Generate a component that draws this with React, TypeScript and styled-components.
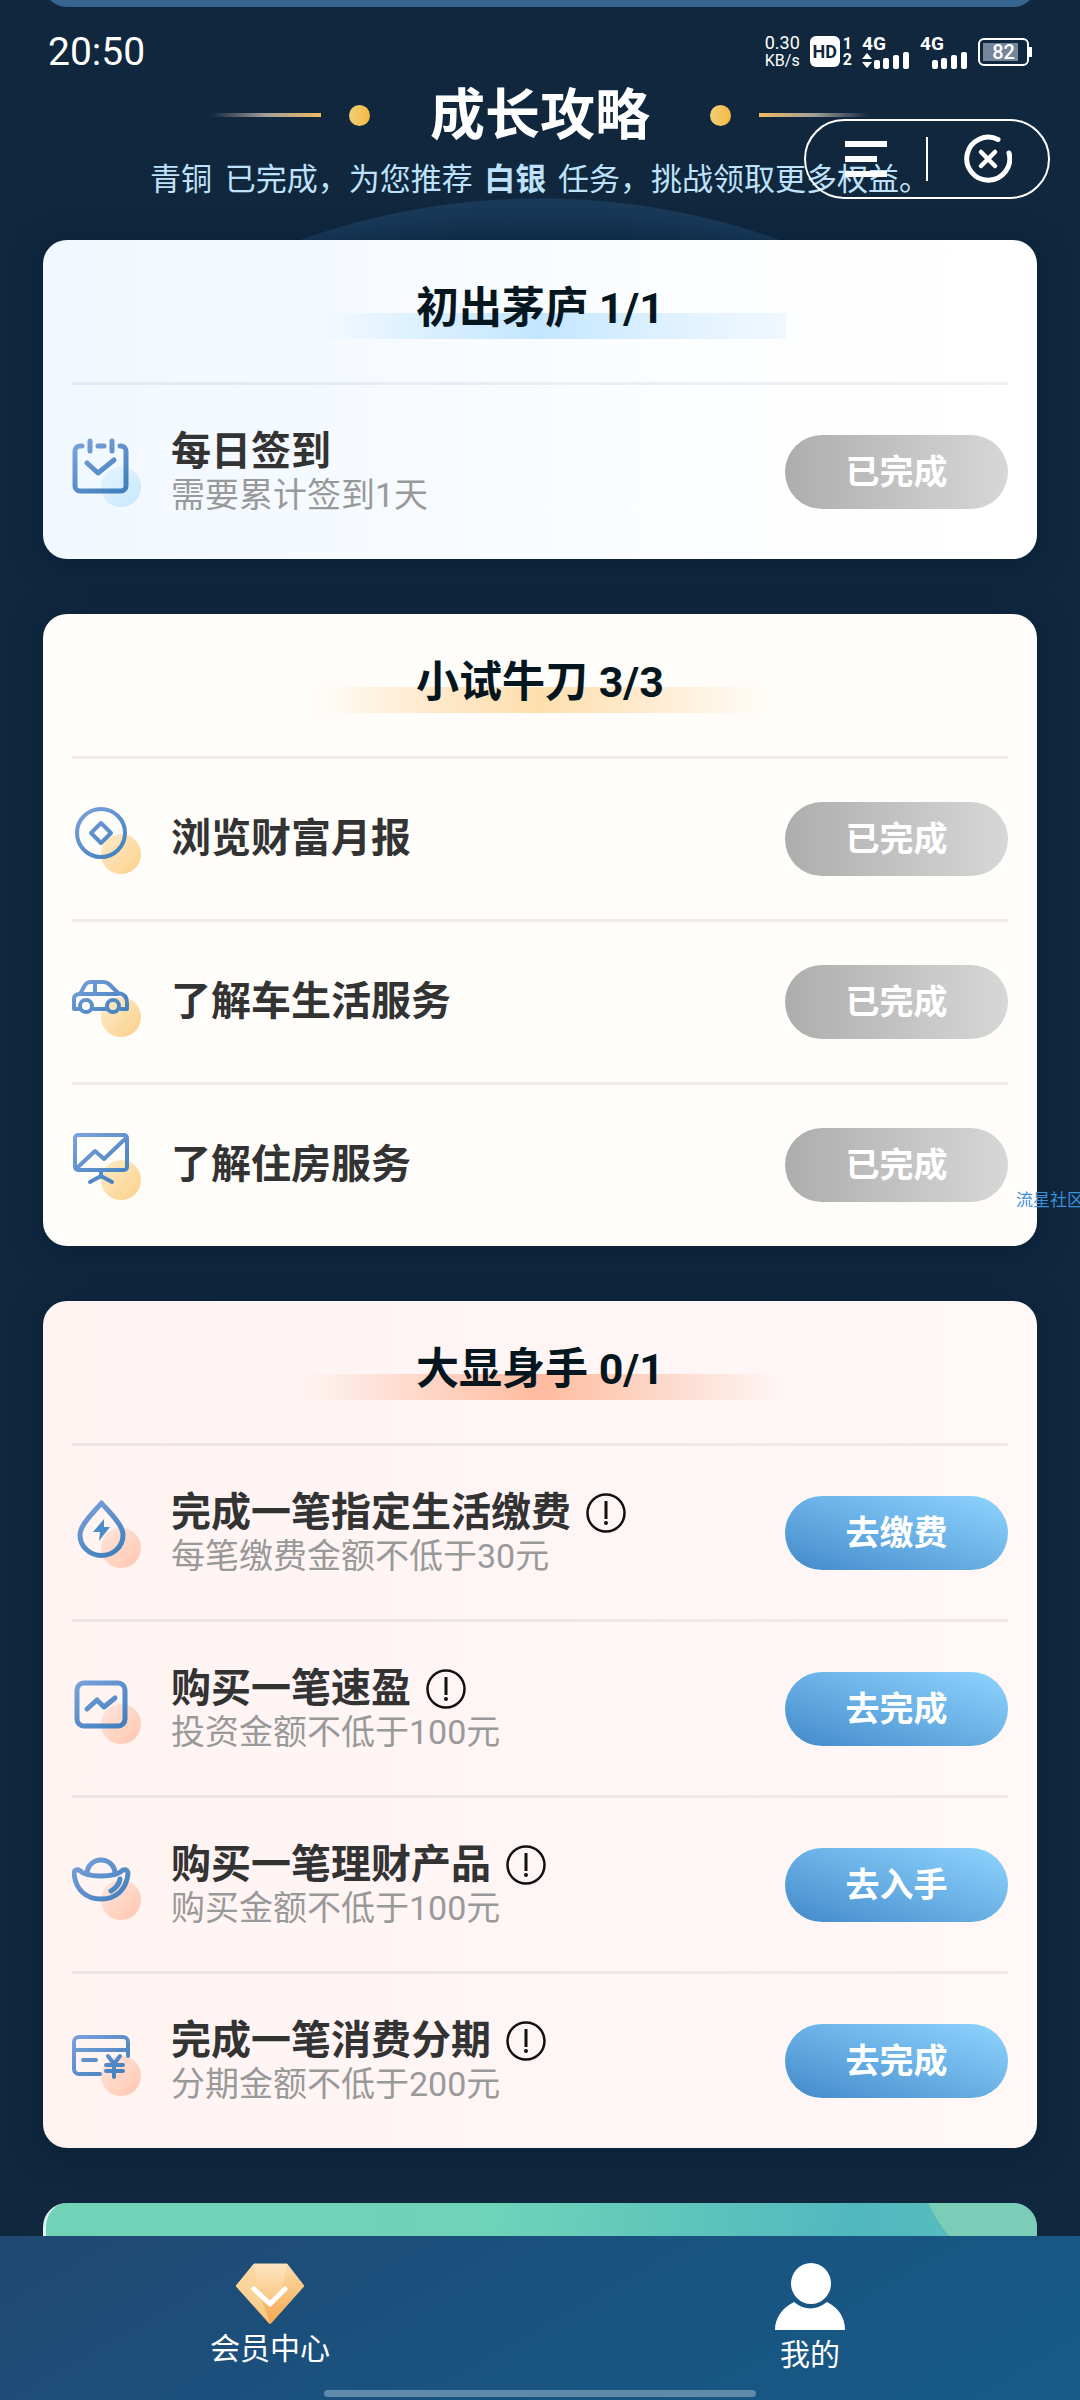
import React from "react";
import styled, { createGlobalStyle } from "styled-components";

const GlobalStyle = createGlobalStyle`
  *, *::before, *::after { box-sizing: border-box; }
  body {
    margin: 0;
    background: #10273e;
    font-family: Roboto, "Noto Sans CJK SC", sans-serif;
  }
  h1, h2, h3, p, ul { margin: 0; padding: 0; }
  ul { list-style: none; }
  button { font-family: inherit; border: 0; padding: 0; background: none; }
  svg { display: block; flex: none; }
`;

type Tone = "blue" | "amber" | "coral";

const tones: Record<
  Tone,
  { card: string; bar: string; dotFrom: string; dotTo: string }
> = {
  blue: {
    card: "linear-gradient(90deg, #f1f8ff 0%, #f7fbff 40%, #fdfeff 70%, #ffffff 100%)",
    bar: "linear-gradient(90deg, rgba(190,228,255,0) 4%, #d9efff 28%, #c3e6ff 50%, #dff1ff 76%, #f1f8ff 100%)",
    dotFrom: "#e6f4ff",
    dotTo: "#c6e7fd",
  },
  amber: {
    card: "#fffdf9",
    bar: "linear-gradient(90deg, rgba(255,226,178,0) 4%, #ffe9cb 28%, #fddfae 50%, #ffeed6 76%, rgba(255,245,228,0) 96%)",
    dotFrom: "#fdecc9",
    dotTo: "#fbd08a",
  },
  coral: {
    card: "linear-gradient(90deg, #fff4f2 0%, #fef5f5 50%, #fff8f7 100%)",
    bar: "linear-gradient(90deg, rgba(255,205,186,0) 1%, #fddccf 22%, #ffbb9f 50%, #fddccf 78%, rgba(255,205,186,0) 99%)",
    dotFrom: "#ffe6dc",
    dotTo: "#ffc6b0",
  },
};

/* ---------- shell ---------- */

const Screen = styled.div`
  display: flex;
  flex-direction: column;
  height: 100vh;
  background: #10273e;
`;

const Content = styled.main`
  position: relative;
  flex: 1;
  min-height: 0;
  overflow: hidden auto;
  scrollbar-width: none;
`;

const PreviousCardEdge = styled.div`
  display: flex;
  align-items: flex-end;
  height: 7px;
  margin: 0 43px;
  overflow: hidden;
`;

const PreviousCard = styled.div`
  flex: 1 0 auto;
  height: 60px;
  border-radius: 24px;
  background: #38658f;
`;

/* ---------- status bar ---------- */

const StatusBar = styled.header`
  display: flex;
  align-items: center;
  justify-content: space-between;
  height: 75px;
  padding: 14px 48px 0;
  color: #fff;
`;

const Clock = styled.time`
  font-size: 39px;
  line-height: 44px;
`;

const StatusIcons = styled.div`
  display: flex;
  align-items: center;
  gap: 10px;
`;

const NetSpeed = styled.div`
  display: flex;
  flex-direction: column;
  align-items: center;
  font-size: 16px;
  line-height: 18px;
`;

const SpeedValue = styled.span`
  font-size: 18px;
`;

const HdGroup = styled.div`
  display: flex;
  gap: 3px;
`;

const HdBadge = styled.span`
  display: flex;
  align-items: center;
  justify-content: center;
  width: 30px;
  height: 31px;
  border-radius: 6px;
  background: #fff;
  color: #10273e;
  font-size: 18px;
  font-weight: 700;
`;

const SimNumbers = styled.span`
  display: flex;
  flex-direction: column;
  font-size: 16px;
  font-weight: 700;
  line-height: 16px;
`;

const SignalGroup = styled.div`
  display: flex;
  flex-direction: column;
  height: 32px;
  font-size: 19px;
  font-weight: 700;
  line-height: 16px;
`;

const Battery = styled.div`
  display: flex;
  align-items: center;
`;

const BatteryBody = styled.div`
  width: 51px;
  height: 28px;
  padding: 3px;
  border: 2px solid #fff;
  border-radius: 6px;
`;

const BatteryLevel = styled.div`
  display: flex;
  align-items: center;
  justify-content: center;
  height: 100%;
  background: linear-gradient(90deg, #75859a 85%, transparent 85%);
  font-size: 20px;
  font-weight: 500;
`;

const BatteryNub = styled.div`
  width: 3px;
  height: 10px;
  background: #fff;
`;

/* ---------- heading ---------- */

const Heading = styled.div`
  display: flex;
  align-items: center;
  justify-content: center;
  height: 66px;
`;

const HeadingText = styled.h1`
  margin: 0 60px;
  color: #fff;
  font-size: 55px;
  font-weight: 700;
  line-height: 66px;
  white-space: nowrap;
`;

const HeadingDot = styled.span`
  width: 21px;
  height: 21px;
  border-radius: 50%;
  background: linear-gradient(90deg, #eed07a, #f8b840);
`;

const HeadingLine = styled.span<{ $side: "left" | "right" }>`
  width: 110px;
  height: 4px;
  margin: ${(p) => (p.$side === "left" ? "0 28px 0 0" : "0 0 0 28px")};
  background: linear-gradient(
    ${(p) => (p.$side === "left" ? "90deg" : "270deg")},
    rgba(160, 160, 160, 0),
    #a3a09a 50%,
    #f0b95f
  );
`;

const Lead = styled.p`
  margin-top: 14px;
  color: #bfe2fb;
  font-size: 31px;
  line-height: 36px;
  text-align: center;
  white-space: nowrap;
`;

const LeadTier = styled.span`
  margin-right: 5px;
`;

const LeadTarget = styled.strong`
  margin: 0 4px;
`;

const Arc = styled.div`
  height: 42px;
  background: radial-gradient(
    circle 714px at 50% 714px,
    #12304b 674px,
    #1a3a5a 713px,
    transparent 714px
  );
`;

const Capsule = styled.div`
  position: absolute;
  top: 119px;
  right: 30px;
  display: flex;
  align-items: center;
  width: 246px;
  height: 80px;
  border: 2px solid #fff;
  border-radius: 40px;
`;

const CapsuleButton = styled.button`
  display: flex;
  flex: 1;
  align-items: center;
  justify-content: center;
  height: 100%;
  color: #fff;
`;

const CapsuleDivider = styled.span`
  width: 2px;
  height: 44px;
  background: #fff;
`;

/* ---------- cards ---------- */

const Cards = styled.div`
  display: flex;
  flex-direction: column;
  gap: 55px;
  padding: 0 43px;
`;

const Card = styled.section<{ $tone: Tone }>`
  padding: 0 29px 1px;
  border-radius: 24px;
  background: ${(p) => tones[p.$tone].card};
  box-shadow: 0 4px 30px rgba(4, 30, 52, 0.6);
`;

const CardHeader = styled.div`
  display: flex;
  justify-content: center;
  padding: 41px 0 43px;
`;

const CardTitle = styled.h2<{ $tone: Tone }>`
  width: 492px;
  padding-bottom: 4px;
  background: ${(p) => tones[p.$tone].bar} bottom / 100% 26px no-repeat;
  color: #06161f;
  font-size: 43px;
  font-weight: 700;
  line-height: 54px;
  text-align: center;
`;

const Row = styled.li`
  display: flex;
  align-items: center;
  gap: 29px;
  padding: 43px 0;
  border-top: 3px solid rgba(60, 70, 90, 0.08);
`;

const RowText = styled.div`
  flex: 1;
  min-width: 0;
`;

const RowTitleLine = styled.div`
  display: flex;
  align-items: center;
  gap: 15px;
`;

const RowTitle = styled.h3`
  color: #333;
  font-size: 40px;
  font-weight: 700;
  line-height: 48px;
`;

const RowNote = styled.p`
  color: #999;
  font-size: 34px;
  font-weight: 400;
  line-height: 39px;
`;

const InfoButton = styled.button`
  color: #111;
`;

const ActionButton = styled.button`
  width: 223px;
  height: 74px;
  border-radius: 37px;
  background: linear-gradient(to top right, #4389cd, #62a9e0 40%, #8fd4ff);
  color: #fff;
  font-size: 34px;
  font-weight: 700;
  line-height: 40px;

  &:disabled {
    background: linear-gradient(90deg, #adadad, #d7d7d7);
  }
`;

const NextBanner = styled.div`
  height: 160px;
  border-left: 3px solid #e3f3f4;
  border-radius: 24px;
  background: radial-gradient(circle 130px at calc(100% + 10px) -52px, #7ccdb8 129px, transparent 130px),
    linear-gradient(96deg, #72d2b8 0%, #6fd3b9 45%, #62c7ba 60%, #52b8bf 80%, #5abfba 100%);
`;

const Watermark = styled.span`
  position: absolute;
  top: 1188px;
  left: calc(100% - 64px);
  color: #3d90d8;
  font-size: 17px;
  line-height: 24px;
  white-space: nowrap;
`;

/* ---------- bottom navigation ---------- */

const TabBar = styled.nav`
  position: relative;
  display: grid;
  grid-template-columns: 1fr 1fr;
  height: 164px;
  padding-top: 27px;
  background: linear-gradient(150deg, #204872 0%, #1a5380 50%, #165b87 100%);
`;

const Tab = styled.a`
  display: flex;
  flex-direction: column;
  align-items: center;
  gap: 7px;
  color: #fff;
  font-size: 30px;
  line-height: 36px;
  text-decoration: none;
`;

const HomeIndicator = styled.span`
  position: absolute;
  bottom: 3px;
  left: 30%;
  width: 40%;
  height: 7px;
  border-radius: 4px;
  background: #5f8aaa;
`;

/* ---------- drawings ---------- */

type IconName =
  | "calendar"
  | "coin"
  | "car"
  | "board"
  | "drop"
  | "trend"
  | "ingot"
  | "bankCard";

const glyphs: Record<IconName, React.ReactNode> = {
  calendar: (
    <g strokeWidth={5}>
      <path d="M10 9H8a5 5 0 0 0-5 5v35a5 5 0 0 0 5 5h41a5 5 0 0 0 5-5V14a5 5 0 0 0-5-5h-1M26 9h6" />
      <path d="M18 4v10M40 4v10" />
      <path d="M15 26l11 10 16-13" />
    </g>
  ),
  coin: (
    <>
      <circle cx="29" cy="29" r="24" />
      <path d="M29 19l10 10-10 10-10-10z" />
    </>
  ),
  car: (
    <>
      <path d="M7 42H2V32q0-5 6-5l5-9q2-3 6-3h12q4 0 7 3l8 8q9 1 9 10v6h-6M22 42h12" />
      <path d="M8 27h38M23 15v12" />
      <circle cx="14" cy="39" r="6" />
      <circle cx="41" cy="39" r="6" />
    </>
  ),
  board: (
    <>
      <rect x="3" y="5" width="52" height="35" rx="3" />
      <path d="M6 37l17-16 9 8 22-21M29 40v7M18 52l11-6 11 6" />
    </>
  ),
  drop: (
    <>
      <path
        d="M29.500 5C21 15 8 27 8 37a21.500 20.500 0 0 0 43 0C51 27 38 15 29.500 5z"
        strokeWidth={5}
      />
      <path d="M32 21L21 34h7l-1 9 11-14h-6z" fill="currentColor" stroke="none" />
    </>
  ),
  trend: (
    <g strokeWidth={5}>
      <rect x="5" y="9" width="48" height="43" rx="7" />
      <path d="M15 35l10-9 7 7 11-9" />
    </g>
  ),
  ingot: (
    <g strokeWidth={5}>
      <path d="M15 24c0-8 6-14 14-14s14 6 14 14" />
      <path d="M7 20q-5-1-5 4c2 16 12 25 27 25s25-9 27-25q0-5-5-4c-4 4-12 6-22 6S11 24 7 20z" />
      <path d="M48 29c-1 6-4 9-9 12" />
    </g>
  ),
  bankCard: (
    <>
      <path d="M28 48H7a5 5 0 0 1-5-5V16a5 5 0 0 1 5-5h44a5 5 0 0 1 5 5v14M2 24h54M11 34h13" />
      <path d="M36 30l6 8 6-8M42 38v13M34 39h17M34 45h17" />
    </>
  ),
};

function TaskIcon({ name, tone }: { name: IconName; tone: Tone }) {
  const stroke = `stroke-${name}`;
  const dot = `dot-${name}`;
  return (
    <svg width="70" height="70" viewBox="0 0 70 70" color="#4a8bcb" aria-hidden="true">
      <defs>
        <linearGradient id={stroke} gradientUnits="userSpaceOnUse" x1="8" y1="4" x2="44" y2="54">
          <stop offset="0" stopColor="#7ba1db" />
          <stop offset="1" stopColor="#4281be" />
        </linearGradient>
        <linearGradient id={dot} x1="0" y1="0" x2="1" y2="1">
          <stop offset="0" stopColor={tones[tone].dotFrom} />
          <stop offset="1" stopColor={tones[tone].dotTo} />
        </linearGradient>
      </defs>
      <circle cx="49" cy="50" r="20" fill={`url(#${dot})`} />
      <g
        fill="none"
        stroke={`url(#${stroke})`}
        strokeWidth="4"
        strokeLinecap="round"
        strokeLinejoin="round"
      >
        {glyphs[name]}
      </g>
    </svg>
  );
}

function InfoIcon() {
  return (
    <svg width="40" height="40" viewBox="0 0 40 40" aria-hidden="true">
      <circle cx="20" cy="20" r="18.500" fill="none" stroke="currentColor" strokeWidth="2.500" />
      <path d="M20 8v18" stroke="currentColor" strokeWidth="3" />
      <circle cx="20" cy="30" r="2" fill="currentColor" />
    </svg>
  );
}

function SignalBars({ arrows }: { arrows?: boolean }) {
  return (
    <svg width="48" height="17" viewBox="0 0 48 17" fill="#fff" aria-hidden="true">
      {arrows && <path d="M0 7l5-6 5 6zM0 10h10l-5 6z" />}
      <rect x="12" y="8" width="6" height="9" rx="2" />
      <rect x="21" y="6" width="6" height="11" rx="2" />
      <rect x="31" y="3" width="6" height="14" rx="2" />
      <rect x="41" y="0" width="6" height="17" rx="2" />
    </svg>
  );
}

function MenuIcon() {
  return (
    <svg width="44" height="38" viewBox="0 0 44 38" stroke="currentColor" strokeWidth="6" aria-hidden="true">
      <path d="M1 4h42M1 19h32M1 34h42" />
    </svg>
  );
}

function CloseIcon() {
  return (
    <svg width="48" height="50" viewBox="0 0 48 50" fill="none" stroke="currentColor" strokeLinecap="round" aria-hidden="true">
      <path d="M34 5.500A21.500 21.500 0 1 0 45 19" strokeWidth="5" />
      <path d="M17 18l14 14M31 18L17 32" strokeWidth="4.500" />
    </svg>
  );
}

function DiamondIcon() {
  return (
    <svg width="70" height="61" viewBox="0 0 70 61" aria-hidden="true">
      <defs>
        <linearGradient id="gem-base" x1="0" y1="0" x2="0" y2="1">
          <stop offset="0" stopColor="#fbdcaa" />
          <stop offset="1" stopColor="#f7a850" />
        </linearGradient>
        <linearGradient id="gem-face" x1="0" y1="0" x2="0" y2="1">
          <stop offset="0" stopColor="#fee6c2" />
          <stop offset="1" stopColor="#f9c27d" />
        </linearGradient>
      </defs>
      <path
        d="M19 1h33l17 22-33 37q-1 1-2 0L1 23z"
        fill="url(#gem-base)"
        stroke="url(#gem-base)"
        strokeLinejoin="round"
      />
      <path d="M1 23L19 1l4 26 12 33z" fill="#fcd9a3" opacity="0.7" />
      <path d="M19 1h33l-6 29-11 12-12-13z" fill="url(#gem-face)" />
      <path d="M19 26l16 15 15-15" fill="none" stroke="#fff" strokeWidth="5" strokeLinecap="round" strokeLinejoin="round" />
    </svg>
  );
}

function PersonIcon() {
  return (
    <svg width="70" height="67" viewBox="0 0 70 67" fill="#fff" aria-hidden="true">
      <ellipse cx="36" cy="20.500" rx="20" ry="20.500" />
      <path d="M19 39q16 13 33 0c12 6 18 16 18 28H0c0-12 7-22 19-28z" />
    </svg>
  );
}

/* ---------- data ---------- */

interface Task {
  icon: IconName;
  title: string;
  note?: string;
  info?: boolean;
  action: string;
  done?: boolean;
}

interface Stage {
  tone: Tone;
  title: string;
  tasks: Task[];
}

const stages: Stage[] = [
  {
    tone: "blue",
    title: "初出茅庐 1/1",
    tasks: [
      { icon: "calendar", title: "每日签到", note: "需要累计签到1天", action: "已完成", done: true },
    ],
  },
  {
    tone: "amber",
    title: "小试牛刀 3/3",
    tasks: [
      { icon: "coin", title: "浏览财富月报", action: "已完成", done: true },
      { icon: "car", title: "了解车生活服务", action: "已完成", done: true },
      { icon: "board", title: "了解住房服务", action: "已完成", done: true },
    ],
  },
  {
    tone: "coral",
    title: "大显身手 0/1",
    tasks: [
      { icon: "drop", title: "完成一笔指定生活缴费", note: "每笔缴费金额不低于30元", info: true, action: "去缴费" },
      { icon: "trend", title: "购买一笔速盈", note: "投资金额不低于100元", info: true, action: "去完成" },
      { icon: "ingot", title: "购买一笔理财产品", note: "购买金额不低于100元", info: true, action: "去入手" },
      { icon: "bankCard", title: "完成一笔消费分期", note: "分期金额不低于200元", info: true, action: "去完成" },
    ],
  },
];

function TaskRow({ task, tone }: { task: Task; tone: Tone }) {
  return (
    <Row>
      <TaskIcon name={task.icon} tone={tone} />
      <RowText>
        <RowTitleLine>
          <RowTitle>{task.title}</RowTitle>
          {task.info && (
            <InfoButton type="button" aria-label="说明">
              <InfoIcon />
            </InfoButton>
          )}
        </RowTitleLine>
        {task.note && <RowNote>{task.note}</RowNote>}
      </RowText>
      <ActionButton type="button" disabled={task.done}>
        {task.action}
      </ActionButton>
    </Row>
  );
}

export default function App() {
  return (
    <Screen>
      <GlobalStyle />
      <Content>
        <PreviousCardEdge>
          <PreviousCard />
        </PreviousCardEdge>

        <StatusBar>
          <Clock>20:50</Clock>
          <StatusIcons>
            <NetSpeed>
              <SpeedValue>0.30</SpeedValue>
              <span>KB/s</span>
            </NetSpeed>
            <HdGroup>
              <HdBadge>HD</HdBadge>
              <SimNumbers>
                <span>1</span>
                <span>2</span>
              </SimNumbers>
            </HdGroup>
            <SignalGroup>
              <span>4G</span>
              <SignalBars arrows />
            </SignalGroup>
            <SignalGroup>
              <span>4G</span>
              <SignalBars />
            </SignalGroup>
            <Battery>
              <BatteryBody>
                <BatteryLevel>82</BatteryLevel>
              </BatteryBody>
              <BatteryNub />
            </Battery>
          </StatusIcons>
        </StatusBar>

        <Heading>
          <HeadingLine $side="left" />
          <HeadingDot />
          <HeadingText>成长攻略</HeadingText>
          <HeadingDot />
          <HeadingLine $side="right" />
        </Heading>
        <Lead>
          <LeadTier>青铜</LeadTier> 已完成，为您推荐 <LeadTarget>白银</LeadTarget> 任务，挑战领取更多权益。
        </Lead>
        <Arc />

        <Cards>
          {stages.map((stage) => (
            <Card key={stage.title} $tone={stage.tone}>
              <CardHeader>
                <CardTitle $tone={stage.tone}>{stage.title}</CardTitle>
              </CardHeader>
              <ul>
                {stage.tasks.map((task) => (
                  <TaskRow key={task.title} task={task} tone={stage.tone} />
                ))}
              </ul>
            </Card>
          ))}
          <NextBanner />
        </Cards>

        <Watermark>流星社区</Watermark>

        <Capsule>
          <CapsuleButton type="button" aria-label="菜单">
            <MenuIcon />
          </CapsuleButton>
          <CapsuleDivider />
          <CapsuleButton type="button" aria-label="关闭">
            <CloseIcon />
          </CapsuleButton>
        </Capsule>
      </Content>

      <TabBar>
        <Tab href="#member">
          <DiamondIcon />
          会员中心
        </Tab>
        <Tab href="#mine">
          <PersonIcon />
          我的
        </Tab>
        <HomeIndicator />
      </TabBar>
    </Screen>
  );
}
